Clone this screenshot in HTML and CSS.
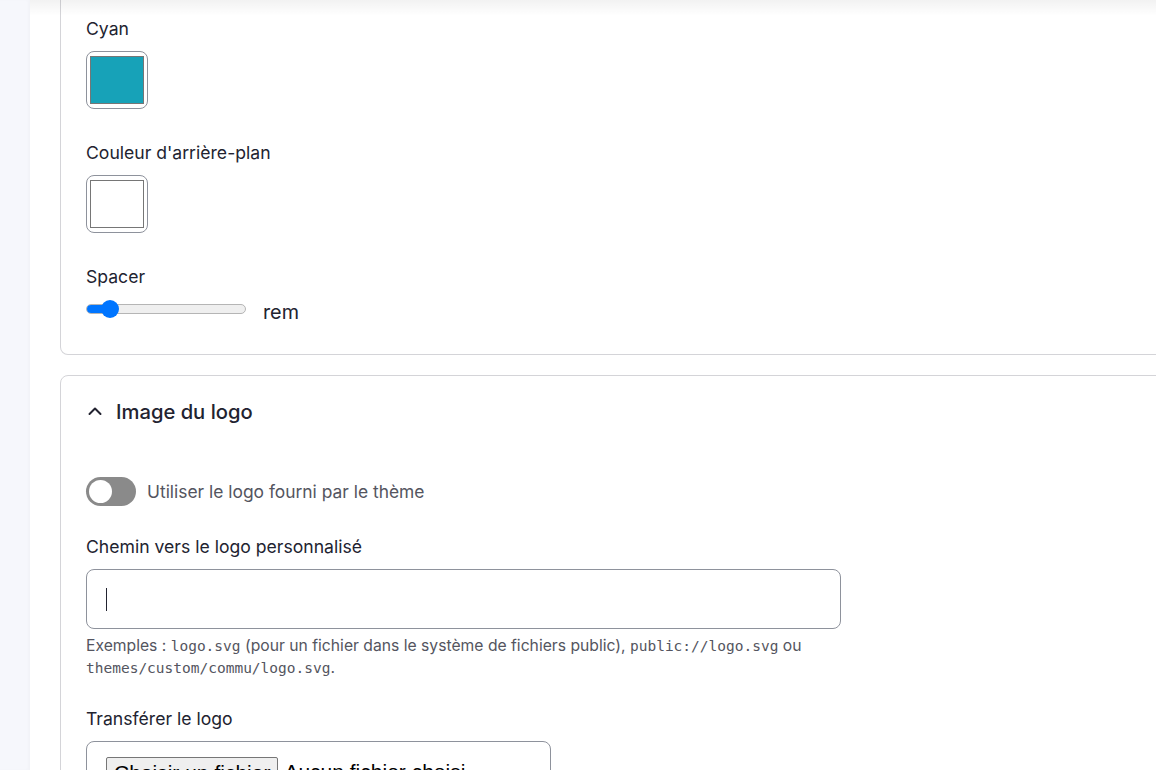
FILE: index.html
```html
<!DOCTYPE html>
<html lang="fr">
<head>
<meta charset="utf-8">
<title>Paramètres du thème</title>
<link rel="stylesheet" href="styles.css">
</head>
<body>
<div class="layout">
  <aside class="sidebar"></aside>
  <main class="main">
    <div class="header-shadow"></div>
    <section class="card card-first">
      <div class="field">
        <div class="label">Cyan</div>
        <div class="swatch"><div class="swatch-fill cyan"></div></div>
      </div>
      <div class="field">
        <div class="label">Couleur d'arrière-plan</div>
        <div class="swatch"><div class="swatch-fill white"></div></div>
      </div>
      <div class="field">
        <div class="label">Spacer</div>
        <div class="range-row">
          <div class="range">
            <div class="range-track"><div class="range-fill"></div></div>
            <div class="range-thumb"></div>
          </div>
          <span class="unit">rem</span>
        </div>
      </div>
    </section>

    <section class="card card-second">
      <div class="summary">
        <svg class="chevron" width="16" height="16" viewBox="0 0 16 16"><path d="M2.5 11 L8 5.5 L13.5 11" fill="none" stroke="#222330" stroke-width="2" stroke-linecap="round" stroke-linejoin="round"/></svg>
        <span class="summary-title">Image du logo</span>
      </div>
      <div class="toggle-row">
        <span class="toggle"><span class="knob"></span></span>
        <span class="toggle-label">Utiliser le logo fourni par le thème</span>
      </div>
      <div class="field field-text">
        <div class="label">Chemin vers le logo personnalisé</div>
        <div class="text-input"><span class="caret"></span></div>
        <div class="description">Exemples : <code>logo.svg</code> (pour un fichier dans le système de fichiers public), <code>public://logo.svg</code> ou <code>themes/custom/commu/logo.svg</code>.</div>
      </div>
      <div class="field field-file">
        <div class="label">Transférer le logo</div>
        <div class="file-input">
          <span class="file-button">Choisir un fichier</span>
          <span class="file-status">Aucun fichier choisi</span>
        </div>
      </div>
    </section>
  </main>
</div>
</body>
</html>
```
FILE: styles.css
```css
html, body {
  margin: 0;
  padding: 0;
  height: 100%;
  overflow: hidden;
  background: #ffffff;
  font-family: Inter, "Noto Sans", sans-serif;
  color: #222330;
}

.layout {
  display: flex;
  height: 770px;
}

.sidebar {
  width: 30px;
  flex: 0 0 30px;
  background: #f6f7fc;
  box-shadow: inset -2px 0 3px rgba(0, 0, 0, 0.02);
}

.main {
  position: relative;
  flex: 1;
  padding-left: 30px;
  min-width: 0;
}

.header-shadow {
  position: absolute;
  top: 0;
  left: 0;
  right: 0;
  height: 16px;
  background: linear-gradient(to bottom, rgba(0, 0, 0, 0.05), rgba(0, 0, 0, 0));
  z-index: 2;
}

.card {
  width: 1120px;
  box-sizing: border-box;
  border: 1px solid #d4d4d8;
  border-radius: 8px;
  background: #fff;
  padding: 0 25px;
}

.card-first {
  margin-top: -20px;
  border-top: none;
  border-top-left-radius: 0;
  border-top-right-radius: 0;
  padding-top: 36px;
  padding-bottom: 35px;
}

.card-second {
  margin-top: 20px;
  padding-top: 21px;
}

.label {
  font-size: 17.6px;
  line-height: 26px;
  color: #222330;
}

.field + .field {
  margin-top: 31px;
}

.field .label {
  margin-bottom: 9px;
}

.swatch {
  width: 62px;
  height: 58px;
  box-sizing: border-box;
  border: 1px solid #8e929c;
  border-radius: 8px;
  padding: 4px 3px 4px 3px;
}

.swatch-fill {
  width: 100%;
  height: 100%;
  box-sizing: border-box;
  border: 1px solid #767676;
}

.swatch-fill.cyan { background: #17a2b8; }
.swatch-fill.white { background: #ffffff; }

.range-row {
  display: flex;
  align-items: center;
  gap: 17px;
  height: 20px;
}

.range {
  position: relative;
  width: 160px;
  height: 18px;
  display: flex;
  align-items: center;
}

.range-track {
  width: 100%;
  height: 10px;
  box-sizing: border-box;
  border: 1px solid #b5b5b5;
  border-radius: 5px;
  background: #efefef;
  overflow: hidden;
}

.range-fill {
  width: 24px;
  height: 100%;
  background: #0075ff;
}

.range-thumb {
  position: absolute;
  left: 15px;
  top: 0;
  width: 18px;
  height: 18px;
  border-radius: 50%;
  background: #0075ff;
}

.unit {
  font-size: 19.8px;
  line-height: 24px;
  color: #222330;
  padding-top: 6px;
}

.summary {
  display: flex;
  align-items: center;
  gap: 13px;
  height: 28px;
  padding-left: 1px;
}

.chevron { display: block; }

.summary-title {
  font-size: 20.2px;
  font-weight: 500;
  color: #222330;
}

.toggle-row {
  display: flex;
  align-items: center;
  gap: 11px;
  margin-top: 52px;
}

.toggle {
  position: relative;
  width: 50px;
  height: 29px;
  border-radius: 15px;
  background: #8a8a8a;
  display: flex;
  align-items: center;
  padding-left: 3px;
  box-sizing: border-box;
}

.knob {
  width: 23px;
  height: 23px;
  border-radius: 50%;
  background: #fff;
}

.toggle-label {
  font-size: 17.4px;
  color: #545560;
}

.field-text {
  margin-top: 28px;
}

.text-input {
  width: 755px;
  height: 60px;
  box-sizing: border-box;
  border: 1px solid #8e929c;
  border-radius: 8px;
  display: flex;
  align-items: center;
  padding-left: 19px;
}

.caret {
  width: 1px;
  height: 23px;
  background: #222330;
}

.description {
  margin-top: 6px;
  font-size: 15.7px;
  line-height: 22px;
  color: #545560;
  max-width: 760px;
}

.description code {
  font-family: "DejaVu Sans Mono", "Liberation Mono", monospace;
  font-size: 14.5px;
}

.field + .field.field-file {
  margin-top: 27px;
}

.file-input {
  width: 465px;
  height: 60px;
  box-sizing: border-box;
  border: 1px solid #8e929c;
  border-radius: 8px;
  padding: 15px 19px;
  display: flex;
  align-items: flex-start;
  gap: 6px;
  font-family: "Liberation Sans", Arial, sans-serif;
  font-size: 21px;
}

.file-button {
  display: inline-block;
  padding: 1px 7px;
  background: #efefef;
  border: 1px solid #767676;
  border-radius: 2px;
  color: #000;
  line-height: 28px;
}

.file-status {
  color: #000;
  line-height: 30px;
}
```
